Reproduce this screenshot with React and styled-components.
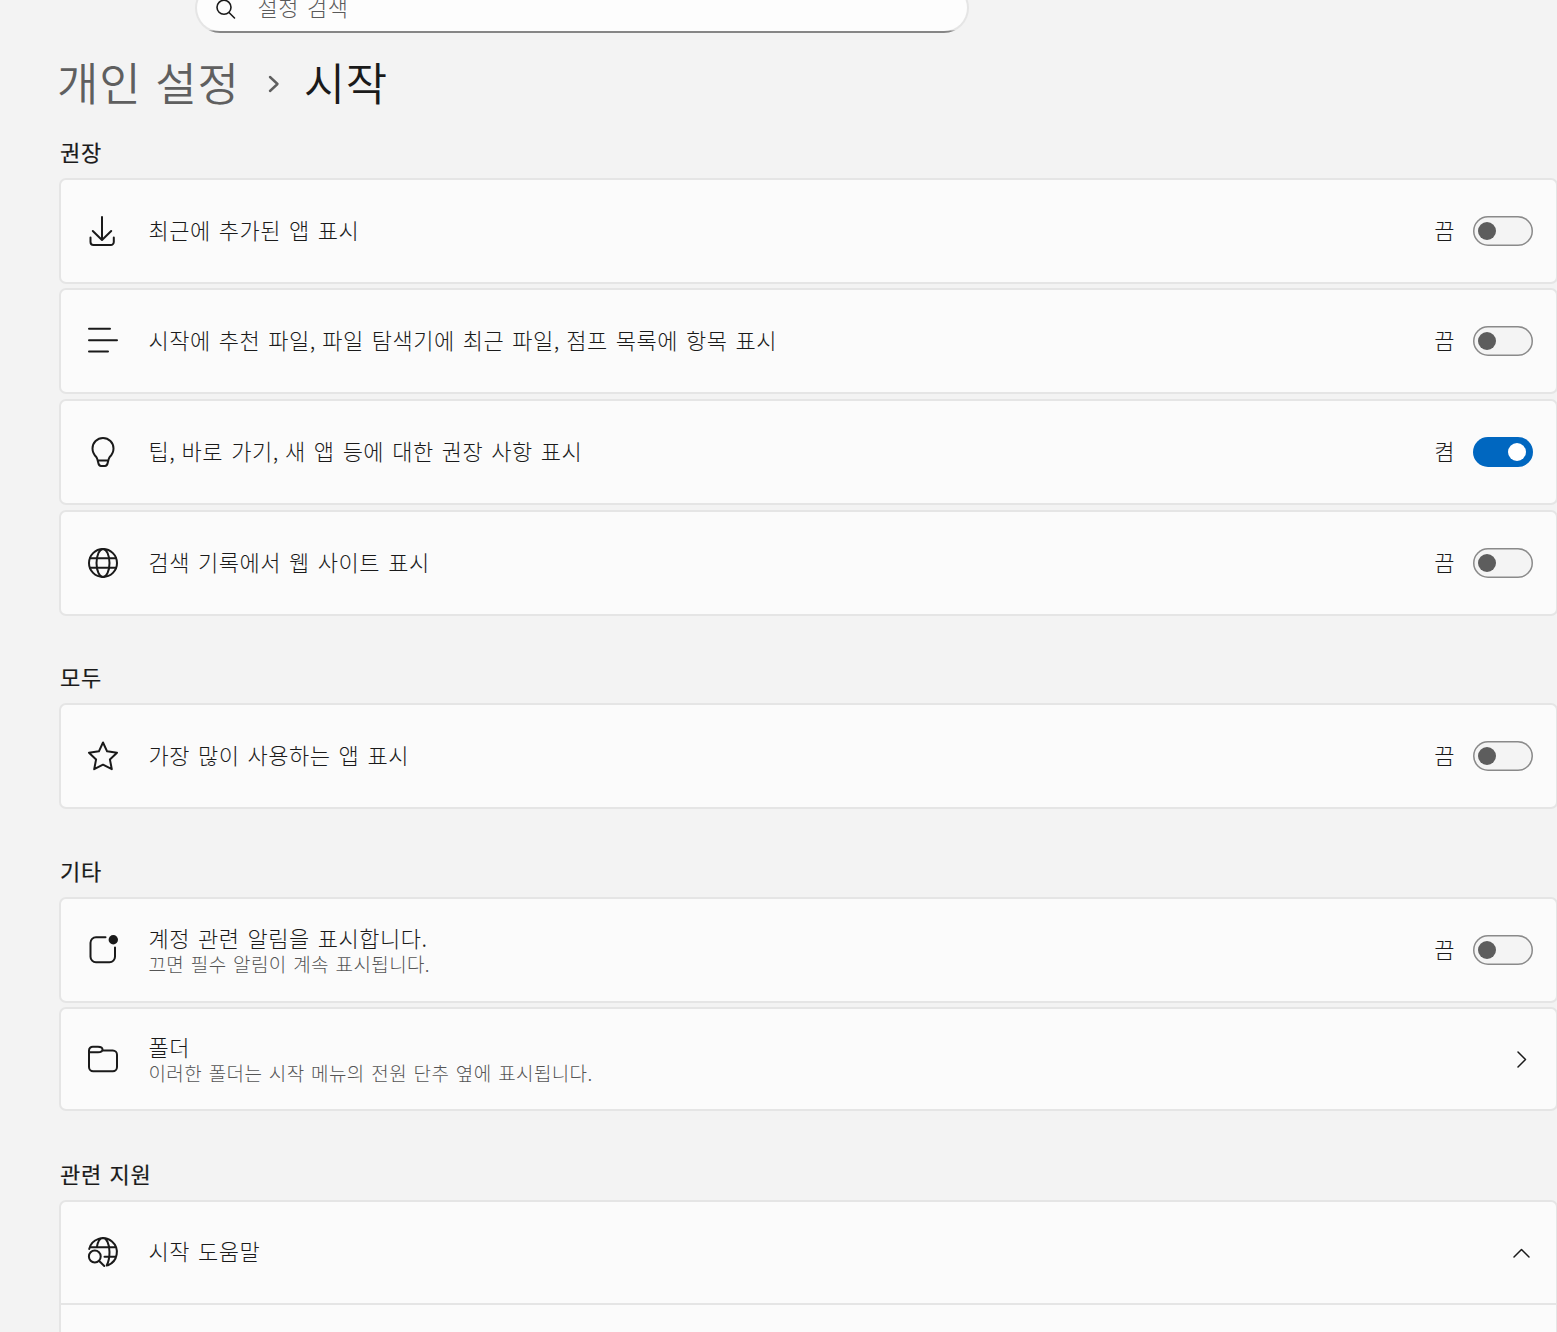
import React, { Fragment } from "react";
import styled, { createGlobalStyle, css } from "styled-components";

const Global = createGlobalStyle`
  * { box-sizing: border-box; }
  html, body { margin: 0; background: #f3f3f3; overflow: hidden; }
  body {
    height: 1332px;
    font-family: "Noto Sans CJK KR", "Noto Sans", sans-serif;
    font-weight: 300;
    color: #1a1a1a;
  }
`;

const Page = styled.div`
  width: 1558px;
  height: 1332px;
  overflow: hidden;
  display: flex;
  flex-direction: column;
  background: #f3f3f3;
`;

const TopBar = styled.header`
  height: 33px;
  flex: none;
  display: flex;
  align-items: flex-end;
  padding-left: 195px;
`;

const SearchBox = styled.div`
  flex: none;
  width: 774px;
  height: 50px;
  display: flex;
  align-items: center;
  gap: 21px;
  padding-left: 18.5px;
  border: 2px solid transparent;
  border-radius: 25px;
  background:
    linear-gradient(#fdfdfd, #fdfdfd) padding-box,
    linear-gradient(to top, #868686 2px, #e5e5e5 3px) border-box;
`;

const SearchIcon = styled.svg`
  flex: none;
  margin-top: 3px;
`;

const SearchText = styled.span`
  font-size: 22px;
  line-height: 30px;
  padding-bottom: 4px;
  letter-spacing: 0.4px;
  word-spacing: 3px;
  color: #5a5a5a;
`;

const Breadcrumb = styled.nav`
  height: 95px;
  flex: none;
  display: flex;
  align-items: center;
  padding: 3px 0 0 57px;
  font-size: 45px;
  line-height: 60px;
  font-weight: 350;
  letter-spacing: 0.8px;
  word-spacing: 3px;
`;

const Crumb = styled.span`
  color: ${(p) => (p.$current ? "#1a1a1a" : "#5f5f5f")};
`;

const CrumbArrow = styled.svg`
  margin: 3px 24px 0 28px;
  flex: none;
`;

const Section = styled.section`
  flex: none;
  margin-bottom: ${(p) => p.$after || 0}px;
  padding-left: 59px;
`;

const SectionTitle = styled.h2`
  margin: 0;
  height: 50px;
  padding-left: 1px;
  font-size: 22px;
  line-height: 46px;
  font-weight: 400;
  -webkit-text-stroke: 0.2px #1a1a1a;
  letter-spacing: 0.8px;
  word-spacing: 1.6px;
`;

const Card = styled.div`
  height: ${(p) => p.$height || 106}px;
  margin-top: ${(p) => p.$gap || 0}px;
  display: flex;
  align-items: center;
  padding: 0 23px ${(p) => (p.$open ? 1 : 0)}px 27px;
  border: 2px solid #e5e5e5;
  border-radius: ${(p) => (p.$open ? "7px 7px 0 0" : "7px")};
  background: #fbfbfb;
`;

const CardBody = styled.div`
  height: 60px;
  border: 2px solid #e5e5e5;
  border-top: 0;
  background: #fbfbfb;
`;

const Icon = styled.svg`
  width: 30px;
  height: 30px;
  flex: none;
  overflow: visible;
  fill: none;
  stroke: #1a1a1a;
  stroke-width: 2;
  stroke-linecap: round;
  stroke-linejoin: round;
`;

const Labels = styled.div`
  flex: 1;
  margin-left: 30.5px;
  padding-bottom: ${(p) => (p.$double ? 1 : 3)}px;
  display: flex;
  flex-direction: column;
`;

const Title = styled.span`
  font-size: 22px;
  line-height: 27px;
  letter-spacing: 0.5px;
  word-spacing: 2.7px;
`;

const Comma = styled.span`
  letter-spacing: -1.2px;
`;

const Detail = styled.span`
  font-size: 19px;
  line-height: 25px;
  letter-spacing: 0.38px;
  word-spacing: 2px;
  color: #555555;
`;

const State = styled.span`
  font-size: 22px;
  line-height: 28px;
  padding-bottom: 4px;
  margin-right: 18.5px;
`;

const Track = styled.span`
  width: 60px;
  height: 30px;
  flex: none;
  display: flex;
  align-items: center;
  border-radius: 15px;
  ${(p) =>
    p.$on
      ? css`
          justify-content: flex-end;
          padding: 0 7px;
          background: #0067c0;
        `
      : css`
          padding: 0 5px;
          box-shadow: inset 0 0 0 1.5px #8a8a8a;
          background: #f4f4f4;
        `}
`;

const Knob = styled.span`
  width: 18px;
  height: 18px;
  border-radius: 50%;
  background: ${(p) => (p.$on ? "#ffffff" : "#5d5d5d")};
`;

const Chevron = styled.svg`
  width: 18px;
  height: 18px;
  margin-right: 3px;
  margin-top: ${(p) => (p.$up ? 2 : 0)}px;
  flex: none;
  fill: none;
  stroke: #1a1a1a;
  stroke-width: 1.5;
  stroke-linecap: round;
  stroke-linejoin: round;
`;

const icons = {
  download: (
    <path d="M14 1V23.500M4.800 15L14 24L23.200 15M2.500 21.500V26A3 3 0 0 0 5.500 29H22.800A3 3 0 0 0 25.800 26V21.500" />
  ),
  list: <path d="M1 2.700H22M1 14.200H29M1 25.400H20" />,
  bulb: (
    <path d="M15 1A10.500 10.500 0 0 0 4.500 11.500C4.500 15.500 6.300 18 8.300 20C9.300 21 9.600 22.500 10.200 25.500C10.700 28 11.300 29 13 29H17C18.700 29 19.300 28 19.800 25.500C20.400 22.500 20.700 21 21.700 20C23.700 18 25.500 15.500 25.500 11.500A10.500 10.500 0 0 0 15 1ZM9.700 23.500H20.300" />
  ),
  globe: (
    <>
      <circle cx="15" cy="15" r="14" />
      <ellipse cx="15" cy="15" rx="6.500" ry="14" />
      <path d="M2 10.300H28M2 19.700H28" />
    </>
  ),
  star: (
    <path d="M15 1.500L19.100 10.300L29 11.700L21.900 18.400L23.800 28.200L15 23.700L6.200 28.200L8.100 18.400L1 11.700L10.900 10.300Z" />
  ),
  badge: (
    <>
      <path d="M17.500 2.300H8A5.500 5.500 0 0 0 2.500 7.800V21.700A5.500 5.500 0 0 0 8 27.200H21.500A5.500 5.500 0 0 0 27 21.700V12.500" />
      <circle cx="25.300" cy="4.700" r="4.700" fill="#1a1a1a" stroke="none" />
    </>
  ),
  folder: (
    <path d="M1 8.300V6.500A3.800 3.800 0 0 1 4.800 2.700H10C12.500 2.700 14.500 3.800 14.500 5.500S12.500 8.300 10 8.300H1V23A4.200 4.200 0 0 0 5.200 27.200H24.800A4.200 4.200 0 0 0 29 23V10.700A4.200 4.200 0 0 0 24.800 6.500H14.500" />
  ),
  help: (
    <>
      <path d="M1.200 12A14 14 0 1 1 20 28.200M2 10.300H28M16.500 19.700H28M8.800 10.300C9.800 4.500 12 1 15 1C18.500 1 21.500 7 21.500 15C21.500 20.500 20.500 25 18.700 28.500" />
      <circle cx="6.800" cy="19.500" r="5.900" />
      <path d="M11.200 24L16.300 29" />
    </>
  ),
};

function Row({ icon, title, detail, on, chevron, ...card }) {
  return (
    <Card {...card}>
      <Icon viewBox="0 0 30 30">{icons[icon]}</Icon>
      <Labels $double={!!detail}>
        <Title>
          {title.split(",").map((part, i) => (
            <Fragment key={i}>
              {i > 0 && <Comma>,</Comma>}
              {part}
            </Fragment>
          ))}
        </Title>
        {detail && <Detail>{detail}</Detail>}
      </Labels>
      {chevron ? (
        <Chevron viewBox="0 0 18 18" $up={chevron === "up"}>
          <path d={chevron === "right" ? "M6 2L13.500 9.500L6 17" : "M2 13L9.500 5.500L17 13"} />
        </Chevron>
      ) : (
        <>
          <State>{on ? "켬" : "끔"}</State>
          <Track $on={on}>
            <Knob $on={on} />
          </Track>
        </>
      )}
    </Card>
  );
}

export default function App() {
  return (
    <>
      <Global />
      <Page>
        <TopBar>
          <SearchBox>
            <SearchIcon width="21" height="21" viewBox="0 0 21 21" fill="none" stroke="#1a1a1a" strokeWidth="1.600" strokeLinecap="round">
              <circle cx="8" cy="8.300" r="7" />
              <path d="M13 13.500L18.500 19" />
            </SearchIcon>
            <SearchText>설정 검색</SearchText>
          </SearchBox>
        </TopBar>
        <Breadcrumb>
          <Crumb>개인 설정</Crumb>
          <CrumbArrow width="12" height="18" viewBox="0 0 12 18" fill="none" stroke="#5f5f5f" strokeWidth="2.400" strokeLinecap="round" strokeLinejoin="round">
            <path d="M2 2L9.500 9L2 16" />
          </CrumbArrow>
          <Crumb $current>시작</Crumb>
        </Breadcrumb>
        <Section $after={37}>
          <SectionTitle>권장</SectionTitle>
          <Row icon="download" title="최근에 추가된 앱 표시" />
          <Row icon="list" title="시작에 추천 파일, 파일 탐색기에 최근 파일, 점프 목록에 항목 표시" $gap={4} />
          <Row icon="bulb" title="팁, 바로 가기, 새 앱 등에 대한 권장 사항 표시" on $gap={5} />
          <Row icon="globe" title="검색 기록에서 웹 사이트 표시" $gap={5} />
        </Section>
        <Section $after={38}>
          <SectionTitle>모두</SectionTitle>
          <Row icon="star" title="가장 많이 사용하는 앱 표시" />
        </Section>
        <Section $after={39}>
          <SectionTitle>기타</SectionTitle>
          <Row icon="badge" title="계정 관련 알림을 표시합니다." detail="끄면 필수 알림이 계속 표시됩니다." />
          <Row icon="folder" title="폴더" detail="이러한 폴더는 시작 메뉴의 전원 단추 옆에 표시됩니다." chevron="right" $gap={4} $height={104} />
        </Section>
        <Section>
          <SectionTitle>관련 지원</SectionTitle>
          <Row icon="help" title="시작 도움말" chevron="up" $height={105} $open />
          <CardBody />
        </Section>
      </Page>
    </>
  );
}
